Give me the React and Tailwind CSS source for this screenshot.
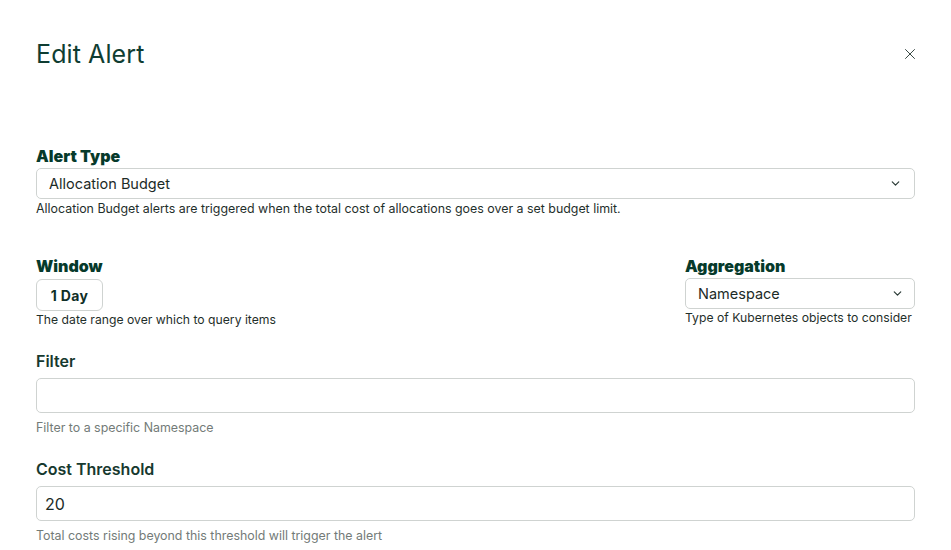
import { ChevronDown, X } from 'lucide-react';

const font = { fontFamily: 'Inter, "Liberation Sans", sans-serif' };

function Select({ value, className = '' }) {
  return (
    <div className={`flex items-center justify-between border border-[#cfd3d1] rounded-[5px] bg-white ${className}`}>
      <span className="text-[14.5px] text-[#1c2b27]">{value}</span>
      <ChevronDown className="w-[13px] h-[13px] text-[#2a3a36]" strokeWidth={2.2} />
    </div>
  );
}

export default function App() {
  return (
    <div className="w-[951px] h-[550px] bg-white overflow-hidden rounded-tl-[6px]" style={font}>
      <div className="px-[36px] pt-[38px]">
        <div className="flex items-center justify-between h-[32px]">
          <h1 className="text-[25px] leading-[32px] text-[#0f3d32] font-normal tracking-[0.1px]">Edit Alert</h1>
          <X className="w-[18px] h-[18px] text-[#33443f] -mr-[4px]" strokeWidth={1.3} />
        </div>

        <div className="mt-[76px]">
          <div className="text-[16px] leading-[20px] font-black text-[#063a2b]">Alert Type</div>
          <Select value="Allocation Budget" className="mt-[2px] h-[31px] pl-[12px] pr-[12px]" />
          <p className="mt-[2px] text-[12.4px] leading-[16px] text-[#1f2f2b]">
            Allocation Budget alerts are triggered when the total cost of allocations goes over a set budget limit.
          </p>
        </div>

        <div className="mt-[39px] flex justify-between">
          <div>
            <div className="text-[16px] leading-[20px] font-black text-[#063a2b]">Window</div>
            <button className="mt-[3px] h-[32px] w-[67px] border border-[#cfd3d1] rounded-[6px] bg-white text-[14px] font-bold tracking-[0.3px] text-[#0f2f27]">
              1 Day
            </button>
            <p className="mt-[1px] text-[12.2px] leading-[16px] text-[#1f2f2b]">The date range over which to query items</p>
          </div>
          <div className="w-[230px]">
            <div className="text-[16px] leading-[20px] font-black text-[#063a2b]">Aggregation</div>
            <Select value="Namespace" className="mt-[2px] h-[31px] pl-[12px] pr-[10px]" />
            <p className="mt-[1px] text-[12.2px] leading-[16px] text-[#1f2f2b] whitespace-nowrap">Type of Kubernetes objects to consider</p>
          </div>
        </div>

        <div className="mt-[23px]">
          <div className="text-[16px] leading-[20px] font-semibold text-[#17392f]">Filter</div>
          <div className="mt-[7px] h-[35px] border border-[#cfd3d1] rounded-[5px]" />
          <p className="mt-[7px] text-[12.4px] leading-[16px] text-[#737b78]">Filter to a specific Namespace</p>
        </div>

        <div className="mt-[23px]">
          <div className="text-[16px] leading-[20px] font-semibold text-[#17392f]">Cost Threshold</div>
          <div className="mt-[7px] h-[35px] border border-[#cfd3d1] rounded-[5px] flex items-center px-[8px]">
            <span className="text-[16px] text-[#1c2b27]">20</span>
          </div>
          <p className="mt-[7px] text-[12.4px] leading-[16px] text-[#737b78]">Total costs rising beyond this threshold will trigger the alert</p>
        </div>
      </div>
    </div>
  );
}
